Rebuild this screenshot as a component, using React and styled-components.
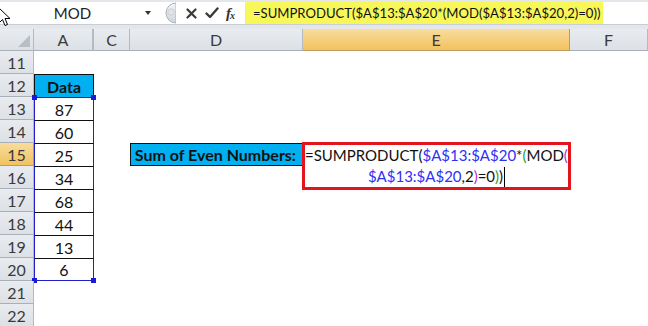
import React from 'react';
import styled, { createGlobalStyle } from 'styled-components';

const Global = createGlobalStyle`
  html, body { margin: 0; padding: 0; background: #fff; }
  body { font-family: Lato, "Open Sans", sans-serif; }
  #root { width: 648px; height: 326px; }
`;

const Page = styled.div`
  position: relative;
  width: 648px;
  height: 326px;
  overflow: hidden;
  background: #fff;
`;

const Toolbar = styled.div`
  box-sizing: border-box;
  height: 29px;
  padding: 2px 0 4px;
  background: #e3e6ea;
`;

const Bar = styled.div`
  display: flex;
  height: 23px;
  background: #fff;
  border-bottom: 1px solid #c9ced5;
  box-sizing: border-box;
`;

const NameBox = styled.div`
  width: 160px;
  display: flex;
  align-items: center;
  box-sizing: border-box;
  padding-right: 6px;
`;

const NameText = styled.span`
  flex: 1;
  text-align: center;
  font-size: 15px;
  color: #222;
`;

const DropArrow = styled.span`
  width: 0;
  height: 0;
  border-left: 3.5px solid transparent;
  border-right: 3.5px solid transparent;
  border-top: 4px solid #333;
  margin-right: 3px;
`;

const Grip = styled.div`
  width: 16px;
  display: flex;
  align-items: center;
`;

const Buttons = styled.div`
  width: 69px;
  display: flex;
  align-items: center;
  padding-left: 10px;
  box-sizing: border-box;
`;

const IconBtn = styled.span`
  display: inline-flex;
  width: ${p => p.$w}px;
  justify-content: flex-start;
`;

const Fx = styled.span`
  font-family: "Liberation Serif", "DejaVu Serif", serif;
  font-style: italic;
  font-weight: bold;
  font-size: 15px;
  color: #333;
  letter-spacing: -1px;
  sub { font-size: 10px; vertical-align: -1px; }
`;

const FormulaField = styled.div`
  flex: 1;
  display: flex;
`;

const Highlight = styled.div`
  width: 358px;
  background: #f7f75a;
  font-size: 13.1px;
  color: #111;
  display: flex;
  align-items: center;
  padding-left: 8px;
  box-sizing: border-box;
  white-space: nowrap;
`;

const Sheet = styled.div`
  display: grid;
  grid-template-columns: 34px 60px 36px 173px 267px 78px;
  grid-template-rows: 22px repeat(12, 23px);
  font-size: 16px;
`;

const HeadCell = styled.div`
  box-sizing: border-box;
  display: flex;
  align-items: center;
  justify-content: center;
  background: ${p => (p.$active ? 'linear-gradient(#f9dc9c, #f1c25f)' : 'linear-gradient(#e8ebef, #dde1e6)')};
  border-right: ${p => (p.$thick ? '2px' : '1px')} solid ${p => (p.$active ? '#c29a5c' : '#b3bac3')};
  border-bottom: 1px solid ${p => (p.$active ? '#c29a5c' : '#a9b0b9')};
  color: #3a3a3a;
  font-size: 16px;
  position: relative;
`;

const Corner = styled(HeadCell)`
  justify-content: flex-end;
  align-items: flex-end;
  padding: 0 3px 3px 0;
`;

const Triangle = styled.span`
  width: 0;
  height: 0;
  border-left: 12px solid transparent;
  border-bottom: 12px solid #b9bec5;
`;

const Cell = styled.div`
  box-sizing: border-box;
  display: flex;
  align-items: center;
  justify-content: center;
  background: #fff;
  color: #111;
`;

const DataHead = styled(Cell)`
  background: #00b0f0;
  border: 1px solid #111;
  border-bottom: none;
  font-weight: bold;
`;

const DataCell = styled(Cell)`
  position: relative;
  border-top: 1px solid ${p => (p.$first ? '#2020c8' : '#111')};
  border-left: 1.5px solid #2020c8;
  border-right: 1.5px solid #2020c8;
  border-bottom: ${p => (p.$last ? '1.5px solid #2020c8' : 'none')};
`;

const Handle = styled.span`
  position: absolute;
  width: 5px;
  height: 5px;
  background: #1a1ad8;
  ${p => (p.$top ? 'top: -3px;' : 'bottom: -3px;')}
  ${p => (p.$left ? 'left: -3px;' : 'right: -3px;')}
`;

const LabelCell = styled(Cell)`
  background: #00b0f0;
  border: 1px solid #111;
  justify-content: flex-end;
  padding-right: 6px;
  font-weight: bold;
  white-space: nowrap;
`;

const Editor = styled.div`
  grid-column: 5;
  grid-row: 6 / span 2;
  margin: -1px;
  border: 3px solid #e3141b;
  background: #fff;
  box-sizing: border-box;
  position: relative;
  z-index: 2;
  overflow: visible;
  font-size: 15px;
`;

const EditLine = styled.div`
  height: 21px;
  line-height: 21px;
  white-space: nowrap;
  text-align: ${p => (p.$first ? 'left' : 'center')};
  color: #111;
`;

const Ref = styled.span`
  color: ${p => p.$c};
`;

const Caret = styled.span`
  display: inline-block;
  width: 1px;
  height: 20px;
  background: #000;
  vertical-align: -5px;
  margin-left: 1px;
`;

const Pointer = styled.svg`
  position: absolute;
  left: -2px;
  top: 7px;
`;

const BLUE = '#3030f4';
const GREEN = '#2f9a3a';
const PURPLE = '#b02fd6';

const rows = [11, 12, 13, 14, 15, 16, 17, 18, 19, 20, 21, 22];

function ColA({ r }) {
  if (r === 12) return <DataHead>Data</DataHead>;
  const vals = { 13: 87, 14: 60, 15: 25, 16: 34, 17: 68, 18: 44, 19: 13, 20: 6 };
  if (vals[r] !== undefined) {
    return (
      <DataCell $first={r === 13} $last={r === 20}>
        {vals[r]}
        {r === 13 && <><Handle $top $left /><Handle $top /></>}
        {r === 20 && <><Handle $left /><Handle /></>}
      </DataCell>
    );
  }
  return <Cell />;
}

export default function App() {
  return (
    <Page>
      <Global />
      <Toolbar>
        <Bar>
          <NameBox>
            <NameText>MOD</NameText>
            <DropArrow />
          </NameBox>
          <Grip>
            <svg width="16" height="22" viewBox="0 0 16 22">
              <defs>
                <linearGradient id="g" x1="0" y1="0" x2="0" y2="1">
                  <stop offset="0" stopColor="#f6f7f9" />
                  <stop offset="1" stopColor="#cfd4da" />
                </linearGradient>
              </defs>
              <path d="M16 1 A10 10 0 0 0 16 21 Z" fill="url(#g)" stroke="#a9b0b8" strokeWidth="1" />
              <circle cx="11" cy="10" r="3.2" fill="#e2e5e8" stroke="#c3c8ce" strokeWidth="0.8" />
            </svg>
          </Grip>
          <Buttons>
            <IconBtn $w={19}>
              <svg width="11" height="11" viewBox="0 0 11 11">
                <path d="M1.5 1.5 L9.5 9.5 M9.5 1.5 L1.5 9.5" stroke="#3a3a3a" strokeWidth="2.2" strokeLinecap="round" />
              </svg>
            </IconBtn>
            <IconBtn $w={21}>
              <svg width="14" height="12" viewBox="0 0 14 12">
                <path d="M1.5 6.5 L5 10 L12.5 1.5" stroke="#3a3a3a" strokeWidth="2.4" fill="none" strokeLinejoin="round" strokeLinecap="round" />
              </svg>
            </IconBtn>
            <Fx>f<sub>x</sub></Fx>
          </Buttons>
          <FormulaField>
            <Highlight>=SUMPRODUCT($A$13:$A$20*(MOD($A$13:$A$20,2)=0))</Highlight>
          </FormulaField>
        </Bar>
      </Toolbar>
      <Sheet>
        <Corner><Triangle /></Corner>
        <HeadCell $thick>A</HeadCell>
        <HeadCell>C</HeadCell>
        <HeadCell>D</HeadCell>
        <HeadCell $active>E</HeadCell>
        <HeadCell>F</HeadCell>
        {rows.map(r => (
          <React.Fragment key={r}>
            <HeadCell $active={r === 15}>{r}</HeadCell>
            <ColA r={r} />
            <Cell />
            {r === 15 ? <LabelCell>Sum of Even Numbers:</LabelCell> : <Cell />}
            {r === 15 ? (
              <Editor>
                <EditLine $first>
                  =SUMPRODUCT(<Ref $c={BLUE}>$A$13:$A$20</Ref>*<Ref $c={GREEN}>(</Ref>MOD<Ref $c={PURPLE}>(</Ref>
                </EditLine>
                <EditLine>
                  <Ref $c={BLUE}>$A$13:$A$20</Ref>,2<Ref $c={PURPLE}>)</Ref>=0<Ref $c={GREEN}>)</Ref>)<Caret />
                </EditLine>
              </Editor>
            ) : r === 16 ? null : <Cell />}
            <Cell />
          </React.Fragment>
        ))}
      </Sheet>
      <Pointer width="14" height="20" viewBox="0 0 14 20">
        <path d="M1 1 L1 16 L4.5 12.5 L7 18.5 L9.5 17.5 L7 11.5 L12 11.5 Z" fill="#fff" stroke="#000" strokeWidth="1" strokeLinejoin="round" />
      </Pointer>
    </Page>
  );
}
